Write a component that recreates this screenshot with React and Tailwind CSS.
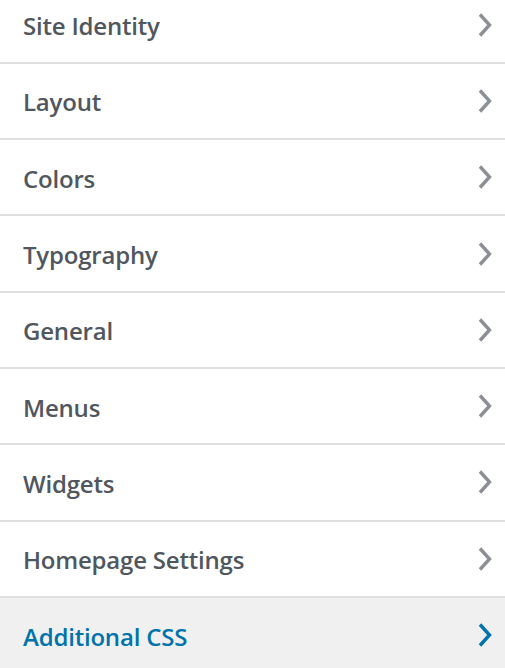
import React from "react";

const items = [
  "Site Identity",
  "Layout",
  "Colors",
  "Typography",
  "General",
  "Menus",
  "Widgets",
  "Homepage Settings",
  "Additional CSS",
];

function Chevron({ active }) {
  return (
    <svg width="16" height="26" viewBox="0 0 16 26" fill="none" className="shrink-0">
      <path
        d="M3 2.5 L12.5 13 L3 23.5"
        stroke={active ? "#0073aa" : "#8c8f94"}
        strokeWidth="3.4"
        strokeLinecap="butt"
        strokeLinejoin="miter"
      />
    </svg>
  );
}

export default function App() {
  return (
    <div
      className="w-[505px] h-[668px] overflow-hidden bg-white"
      style={{ fontFamily: '"Open Sans", "Noto Sans", sans-serif' }}
    >
      <div className="-mt-[12.5px] flex flex-col">
        {items.map((label, i) => {
          const active = i === items.length - 1;
          return (
            <div
              key={label}
              className={
                active
                  ? "flex h-[76.3px] items-center justify-between border-b-2 border-[#e0e0e2] bg-[#f0f0f1] pl-[23px] pr-[12px] text-[#0073aa]"
                  : "flex h-[76.3px] items-center justify-between border-b-2 border-[#e0e0e2] bg-white pl-[23px] pr-[12px] text-[#50575e]"
              }
            >
              <span className="pt-[3px] text-[24px] font-semibold leading-none tracking-[-0.2px]">{label}</span>
              <Chevron active={active} />
            </div>
          );
        })}
      </div>
    </div>
  );
}
